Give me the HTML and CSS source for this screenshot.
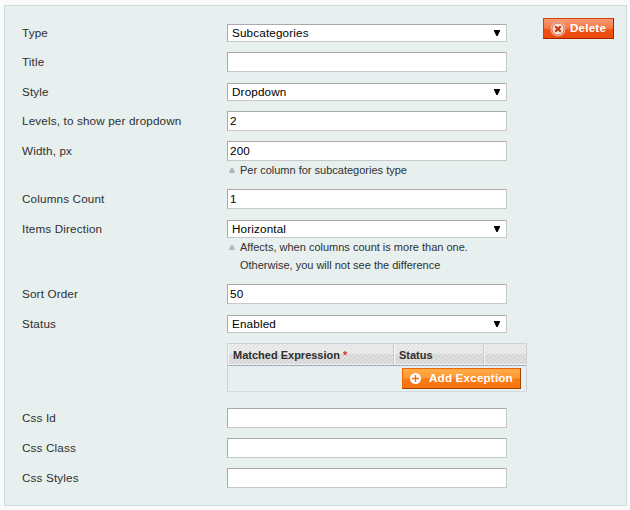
FILE: index.html
```html
<!DOCTYPE html>
<html lang="en">
<head>
<meta charset="utf-8">
<title>Menu item</title>
<link rel="stylesheet" href="styles.css">
</head>
<body>
<section class="panel">
  <form class="form">
    <div class="row"><label class="label" for="type">Type</label><div class="value"><div class="select-box"><select id="type"><option>Subcategories</option></select><svg class="arrow" viewBox="0 0 6 6"><path d="M0 0h6v1L3.6 6H2.4L0 1z"/></svg></div></div></div>
    <div class="row"><label class="label" for="title">Title</label><div class="value"><input id="title" type="text"></div></div>
    <div class="row"><label class="label" for="style">Style</label><div class="value"><div class="select-box"><select id="style"><option>Dropdown</option></select><svg class="arrow" viewBox="0 0 6 6"><path d="M0 0h6v1L3.6 6H2.4L0 1z"/></svg></div></div></div>
    <div class="row"><label class="label" for="levels">Levels, to show per dropdown</label><div class="value"><input id="levels" type="text" value="2"></div></div>
    <div class="row"><label class="label" for="width">Width, px</label><div class="value"><input id="width" type="text" value="200"><p class="note"><svg class="note-mark" viewBox="0 0 6 5"><path d="M2 0h2l2 5H0z"/></svg><span>Per column for subcategories type</span></p></div></div>
    <div class="row"><label class="label" for="columns">Columns Count</label><div class="value"><input id="columns" type="text" value="1"></div></div>
    <div class="row"><label class="label" for="direction">Items Direction</label><div class="value"><div class="select-box"><select id="direction"><option>Horizontal</option></select><svg class="arrow" viewBox="0 0 6 6"><path d="M0 0h6v1L3.6 6H2.4L0 1z"/></svg></div><p class="note"><svg class="note-mark" viewBox="0 0 6 5"><path d="M2 0h2l2 5H0z"/></svg><span>Affects, when columns count is more than one.<br>Otherwise, you will not see the difference</span></p></div></div>
    <div class="row"><label class="label" for="sort">Sort Order</label><div class="value"><input id="sort" type="text" value="50"></div></div>
    <div class="row"><label class="label" for="status">Status</label><div class="value"><div class="select-box"><select id="status"><option>Enabled</option></select><svg class="arrow" viewBox="0 0 6 6"><path d="M0 0h6v1L3.6 6H2.4L0 1z"/></svg></div></div></div>
    <div class="row exceptions">
      <div class="label"></div>
      <div class="grid">
        <div class="grid-head"><div class="cell">Matched Expression <span class="required">*</span></div><div class="cell">Status</div><div class="cell"></div></div>
        <div class="grid-foot">
          <button class="button add" type="button"><svg class="icon-add" viewBox="0 0 11 11"><circle cx="5.5" cy="5.5" r="5.5" fill="#fff"/><path d="M5.5 2v7M2 5.5h7" stroke="#ee6c10" stroke-width="1.3"/></svg><span>Add Exception</span></button>
        </div>
      </div>
    </div>
    <div class="row"><label class="label" for="css-id">Css Id</label><div class="value"><input id="css-id" type="text"></div></div>
    <div class="row"><label class="label" for="css-class">Css Class</label><div class="value"><input id="css-class" type="text"></div></div>
    <div class="row"><label class="label" for="css-styles">Css Styles</label><div class="value"><input id="css-styles" type="text"></div></div>
  </form>
  <button class="button delete" type="button"><svg class="icon-delete" viewBox="0 0 16 16"><circle cx="8" cy="8" r="7" fill="#fbe3dc" stroke="#f9c3ab" stroke-width="1"/><circle cx="8" cy="8" r="6.1" fill="none" stroke="#cc5a3b" stroke-width="1"/><path d="M5.2 5.2l5.6 5.6M10.8 5.2l-5.6 5.6" stroke="#c63b12" stroke-width="2.2"/></svg><span>Delete</span></button>
</section>
</body>
</html>
```

FILE: styles.css
```css
* { box-sizing: border-box; }

body {
  margin: 0;
  padding: 5px 3px 4px 4px;
  background: #fafafa;
  color: #2f2f2f;
  font: 11.7px/20px "Liberation Sans", Arial, sans-serif;
}

.panel {
  display: flex;
  align-items: flex-start;
  gap: 16px;
  height: 501px;
  padding: 17px 12px 17px 17px;
  border: 1px solid #cddddd;
  background: #e7efef;
}

.form {
  display: flex;
  flex-direction: column;
  gap: 10px;
  width: 505px;
}

.row { display: flex; }
.label { width: 205px; height: 19px; flex: none; letter-spacing: .15px; }
.value { width: 280px; }

input, select {
  display: block;
  width: 280px;
  margin: 0;
  border: 1px solid;
  border-color: #aaa #c8c8c8 #c8c8c8 #aaa;
  border-radius: 0;
  background: #fff;
  color: #000;
  font: 11.7px "Liberation Sans", Arial, sans-serif;
  letter-spacing: .15px;
}

input { height: 20px; padding: 0 2px 2px; }
select { height: 18px; padding: 0 4px 2px; appearance: none; }
.select-box { position: relative; padding-top: 1px; }
.arrow { position: absolute; top: 7px; right: 7px; width: 6px; height: 6px; }

.note {
  display: flex;
  margin: 0;
  padding-left: 2px;
  font-size: 11px;
  line-height: 18px;
}

.note-mark { flex: none; width: 6px; height: 5px; margin: 7px 5px 0 0; fill: #a9b9bd; }
.note span { white-space: nowrap; }

.exceptions { margin-bottom: 6px; }

.grid {
  width: 300px;
  height: 49px;
  border: 1px solid #cddddd;
  border-color: #cbd3d4 #cbd3d4 #d5dcde;
}

.grid-head {
  display: grid;
  grid-template-columns: 166px 90px 42px;
  height: 22px;
  border-bottom: 1px solid #9babb9;
  background:
    linear-gradient(135deg, rgba(255,255,255,.3) 25%, rgba(140,140,140,.04) 25% 50%, rgba(255,255,255,.3) 50% 75%, rgba(140,140,140,.04) 75%) 0 0 / 4px 4px,
    linear-gradient(#e6e6e6 0 10px, #d6d6d6 10px 20px, #f2f4f4 20px);
  font-size: 11px;
  font-weight: bold;
  line-height: 22px;
}

.cell { height: 21px; padding-left: 5px; border-right: 1px solid #c5cbcd; box-shadow: inset 1px 0 #f7f7f7; white-space: nowrap; }
.cell:last-child { border-right: 0; }
.required { color: #eb340a; }
.grid-foot { display: flex; justify-content: flex-end; padding: 2px 5px 0; }

.button {
  display: flex;
  align-items: center;
  flex: none;
  height: 21px;
  margin: 0;
  border: 1px solid;
  color: #fff;
  font: bold 11.7px "Liberation Sans", Arial, sans-serif;
  letter-spacing: .16px;
  white-space: nowrap;
}

.button span { padding-bottom: 2px; }

.add {
  width: 119px;
  padding: 0 0 0 7px;
  border-color: #ed6502 #a04300 #a04300 #ed6502;
  background: linear-gradient(#ffac47 0, #ff9735 9px, #fa7b12 10px, #f77410);
}

.delete {
  width: 71px;
  margin-top: -5px;
  padding: 0 0 0 6px;
  border-color: #d24403 #a92000 #a92000 #d24403;
  background: linear-gradient(#f89a72 0, #f37a49 9px, #ed5217 11px, #ed4a0b);
}

.icon-add { width: 11px; height: 11px; margin-right: 8px; }
.icon-delete { width: 16px; height: 16px; margin-right: 4px; }
```
